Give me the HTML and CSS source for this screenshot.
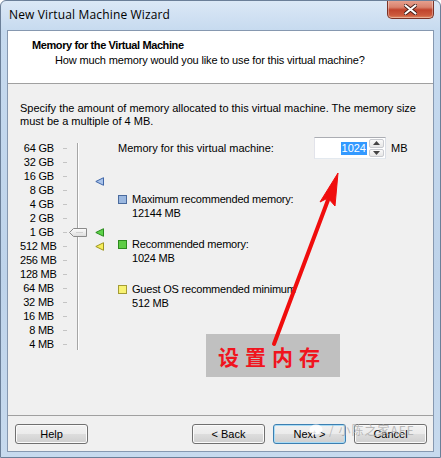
FILE: index.html
```html
<!DOCTYPE html>
<html>
<head>
<meta charset="utf-8">
<link rel="stylesheet" href="styles.css">
</head>
<body>
<div class="window">
  <div class="titlebar">
    <span class="title">New Virtual Machine Wizard</span>
    <div class="close">
      <svg width="13" height="11" viewBox="0 0 13 11"><path d="M1.5 1.5 L11.5 9.5 M11.5 1.5 L1.5 9.5" stroke="#3a1510" stroke-width="3.6" stroke-linecap="round"/><path d="M1.5 1.5 L11.5 9.5 M11.5 1.5 L1.5 9.5" stroke="#fff" stroke-width="2.2" stroke-linecap="round"/></svg>
    </div>
  </div>
  <div class="client">
    <div class="header">
      <div class="h-title">Memory for the Virtual Machine</div>
      <div class="h-sub">How much memory would you like to use for this virtual machine?</div>
    </div>
    <div class="body">
      <p class="intro">Specify the amount of memory allocated to this virtual machine. The memory size<br>must be a multiple of 4 MB.</p>
      <div class="slider-area">
        <div class="scale">
          <div class="track"></div>
          <div class="row"><span class="lbl">64 GB</span><span class="tick"></span></div>
          <div class="row"><span class="lbl">32 GB</span><span class="tick"></span></div>
          <div class="row"><span class="lbl">16 GB</span><span class="tick"></span></div>
          <div class="row"><span class="lbl">8 GB</span><span class="tick"></span></div>
          <div class="row"><span class="lbl">4 GB</span><span class="tick"></span></div>
          <div class="row"><span class="lbl">2 GB</span><span class="tick"></span></div>
          <div class="row"><span class="lbl">1 GB</span><span class="tick"></span></div>
          <div class="row"><span class="lbl">512 MB</span><span class="tick"></span></div>
          <div class="row"><span class="lbl">256 MB</span><span class="tick"></span></div>
          <div class="row"><span class="lbl">128 MB</span><span class="tick"></span></div>
          <div class="row"><span class="lbl">64 MB</span><span class="tick"></span></div>
          <div class="row"><span class="lbl">32 MB</span><span class="tick"></span></div>
          <div class="row"><span class="lbl">16 MB</span><span class="tick"></span></div>
          <div class="row"><span class="lbl">8 MB</span><span class="tick"></span></div>
          <div class="row"><span class="lbl">4 MB</span><span class="tick"></span></div>
          <svg class="thumb" style="top:87px" width="18" height="9" viewBox="0 0 18 9">
            <defs><linearGradient id="tg" x1="0" y1="0" x2="0" y2="1"><stop offset="0" stop-color="#fdfdfd"/><stop offset="1" stop-color="#dcdcdc"/></linearGradient></defs>
            <path d="M0.5 4.5 L4.5 0.5 H17.5 V8.5 H4.5 Z" fill="url(#tg)" stroke="#8a8a8a"/>
            <path d="M7 4.5 H14" stroke="#d0d0d0"/>
          </svg>
          <svg class="marker" style="top:36px" width="10" height="9" viewBox="0 0 10 9"><path d="M0.8 4.5 L8.5 0.7 V8.3 Z" fill="#a9c3ea" stroke="#3f66a8" stroke-linejoin="round"/></svg>
          <svg class="marker" style="top:87px" width="10" height="9" viewBox="0 0 10 9"><path d="M0.8 4.5 L8.5 0.7 V8.3 Z" fill="#5ed34a" stroke="#2a8a1e" stroke-linejoin="round"/></svg>
          <svg class="marker" style="top:101px" width="10" height="9" viewBox="0 0 10 9"><path d="M0.8 4.5 L8.5 0.7 V8.3 Z" fill="#f6ee5a" stroke="#9e9420" stroke-linejoin="round"/></svg>
        </div>
        <div class="settings">
          <div class="mem-row">
            <span class="mem-label">Memory for this virtual machine:</span>
            <div class="spin">
              <div class="field"><span class="sel">1024</span></div>
              <div class="spinbtns">
                <div class="sbtn"><svg width="7" height="4" viewBox="0 0 7 4"><path d="M0 4 L3.5 0 L7 4 Z" fill="#444"/></svg></div>
                <div class="sbtn"><svg width="7" height="4" viewBox="0 0 7 4"><path d="M0 0 L3.5 4 L7 0 Z" fill="#444"/></svg></div>
              </div>
            </div>
            <span class="unit">MB</span>
          </div>
          <div class="legend">
            <div class="item"><span class="sq sq-blue"></span><div><div>Maximum recommended memory:</div><div>12144 MB</div></div></div>
            <div class="item"><span class="sq sq-green"></span><div><div>Recommended memory:</div><div>1024 MB</div></div></div>
            <div class="item"><span class="sq sq-yellow"></span><div><div>Guest OS recommended minimum</div><div>512 MB</div></div></div>
          </div>
        </div>
      </div>
    </div>
    <div class="footer">
      <button class="btn help">Help</button>
      <button class="btn">&lt; Back</button>
      <button class="btn default">Next &gt;</button>
      <button class="btn">Cancel</button>
    </div>
  </div>
  <div class="note">设置内存</div>
  <svg class="arrow" width="441" height="458" viewBox="0 0 441 458">
    <path d="M273 343 L327 199" stroke="#f00d0d" stroke-width="4" stroke-linecap="round"/>
    <path d="M337 172 L319 201 L327 197 L334 205 Z" fill="#f00d0d" stroke="#f00d0d" stroke-width="1" stroke-linejoin="round"/>
  </svg>
  <div class="watermark">
    <svg width="16" height="12" viewBox="0 0 16 12"><ellipse cx="7" cy="5.5" rx="6.5" ry="5" fill="rgba(255,255,255,0.85)"/><path d="M3 9 L2 12 L6 10 Z" fill="rgba(255,255,255,0.85)"/></svg>
    <span class="wm-text">/ 小陈之家AEE</span>
  </div>
</div>
</body>
</html>
```
FILE: styles.css
```css
html, body {
  margin: 0;
  padding: 0;
  background: #ffffff;
}
body {
  font-family: "Liberation Sans", Arial, sans-serif;
  font-size: 11px;
  color: #000;
}
.window {
  position: relative;
  width: 441px;
  height: 458px;
  box-sizing: border-box;
  border: 1px solid #6b7f98;
  border-radius: 6px 6px 0 0;
  background: linear-gradient(180deg, #dbe8f6 0px, #c6daef 30px, #bed3ea 60%, #c7daee 100%);
  overflow: hidden;
}
.titlebar {
  height: 29px;
  display: flex;
  justify-content: space-between;
  align-items: flex-start;
  padding-right: 6px;
}
.title {
  font-family: "Open Sans", "Noto Sans", sans-serif;
  font-size: 12px;
  line-height: 16px;
  margin: 6px 0 0 8px;
  color: #000;
  letter-spacing: 0.15px;
}
.close {
  width: 47px;
  height: 19px;
  box-sizing: border-box;
  margin-top: -1px;
  border: 1px solid #7b3226;
  border-top: none;
  border-radius: 0 0 5px 5px;
  background: linear-gradient(180deg, #e8a493 0%, #d9826d 40%, #c0432c 55%, #cc5a3d 85%, #e08a62 100%);
  box-shadow: inset 0 0 0 1px rgba(255,255,255,0.35);
  display: flex;
  align-items: center;
  justify-content: center;
}
.client {
  margin-left: 6px;
  width: 427px;
  height: 422px;
  box-sizing: border-box;
  border: 1px solid #8698b0;
  background: #f0f0f0;
  display: flex;
  flex-direction: column;
}
.header {
  height: 53px;
  flex: none;
  box-sizing: border-box;
  background: #fff;
  border-bottom: 1px solid #a0a0a0;
  padding: 7px 0 0 24px;
}
.h-title {
  font-weight: bold;
  line-height: 14px;
  letter-spacing: -0.4px;
}
.h-sub {
  line-height: 14px;
  margin: 1px 0 0 23px;
  letter-spacing: -0.15px;
}
.body {
  flex: 1;
  padding: 18px 0 0 12px;
}
.intro {
  margin: 0;
  line-height: 13px;
}
.slider-area {
  display: flex;
  align-items: flex-start;
  margin-top: 13px;
}
.scale {
  position: relative;
  width: 98px;
  flex: none;
}
.row {
  display: flex;
  align-items: center;
  height: 14px;
}
.lbl {
  width: 34px;
  text-align: right;
  white-space: nowrap;
  letter-spacing: -0.2px;
}
.tick {
  width: 4px;
  height: 1px;
  background: #c4c4c4;
  margin-left: 9px;
}
.track {
  position: absolute;
  left: 57px;
  top: 2px;
  width: 1px;
  height: 207px;
  background: #a6a6a6;
  box-shadow: 1px 0 0 #ffffff;
}
.thumb {
  position: absolute;
  left: 49px;
}
.marker {
  position: absolute;
  left: 75px;
}
.settings {
  flex: 1;
  margin-top: -4px;
}
.mem-row {
  display: flex;
  align-items: center;
  height: 22px;
}
.mem-label {
  width: 196px;
  flex: none;
}
.spin {
  display: flex;
  width: 72px;
  height: 22px;
  box-sizing: border-box;
  border: 1px solid;
  border-color: #abadb3 #dbdfe6 #e3e9ef #e2e3ea;
  background: #fff;
}
.field {
  flex: 1;
  display: flex;
  align-items: center;
  justify-content: flex-end;
  padding-right: 2px;
}
.sel {
  background: #3399ff;
  color: #fff;
  line-height: 13px;
  padding: 0 1px;
}
.spinbtns {
  width: 15px;
  display: flex;
  flex-direction: column;
  gap: 1px;
  padding: 1px 1px 1px 0;
}
.sbtn {
  flex: 1;
  display: flex;
  align-items: center;
  justify-content: center;
  border: 1px solid #c9cbd0;
  border-radius: 2px;
  background: linear-gradient(180deg, #fafafa, #e6e6e6);
}
.unit {
  margin-left: 5px;
}
.legend {
  margin-top: 33px;
  display: flex;
  flex-direction: column;
  gap: 17px;
  letter-spacing: -0.2px;
}
.item {
  display: flex;
  align-items: flex-start;
  line-height: 14px;
}
.sq {
  width: 9px;
  height: 9px;
  box-sizing: border-box;
  border: 1px solid;
  margin: 3px 5px 0 0;
  flex: none;
}
.sq-blue { background: #9bb8e0; border-color: #4a6b9e; }
.sq-green { background: #5ecc45; border-color: #2d8a1e; }
.sq-yellow { background: #f8f272; border-color: #a49c35; }
.footer {
  height: 36px;
  flex: none;
  box-sizing: border-box;
  border-top: 1px solid #a0a0a0;
  display: flex;
  align-items: flex-start;
  gap: 8px;
  padding: 8px 6px 0 7px;
}
.btn {
  width: 73px;
  height: 20px;
  box-sizing: border-box;
  padding: 0;
  font-family: "Liberation Sans", Arial, sans-serif;
  font-size: 11px;
  color: #000;
  border: 1px solid #707070;
  border-radius: 3px;
  background: linear-gradient(180deg, #f2f2f2 0%, #ebebeb 50%, #dddddd 51%, #cfcfcf 100%);
  box-shadow: inset 0 0 0 1px #fbfbfb;
}
.help {
  margin-right: auto;
}
.default {
  border-color: #3c7fb1;
  box-shadow: inset 0 0 0 1px #a9dcf6;
}
.note {
  position: absolute;
  left: 205px;
  top: 333px;
  width: 134px;
  height: 43px;
  box-sizing: border-box;
  background: #c0c0c0;
  color: #f0141e;
  font-family: "Noto Sans CJK SC", sans-serif;
  font-weight: bold;
  font-size: 21px;
  letter-spacing: 6px;
  display: flex;
  align-items: center;
  padding-left: 12px;
}
.arrow {
  position: absolute;
  left: 0;
  top: 0;
  pointer-events: none;
}
.watermark {
  position: absolute;
  left: 308px;
  top: 420px;
  display: flex;
  align-items: center;
  gap: 4px;
  pointer-events: none;
}
.wm-text {
  font-family: "Noto Sans CJK SC", sans-serif;
  font-size: 12px;
  color: rgba(175, 175, 175, 0.85);
  letter-spacing: 1px;
}
```
